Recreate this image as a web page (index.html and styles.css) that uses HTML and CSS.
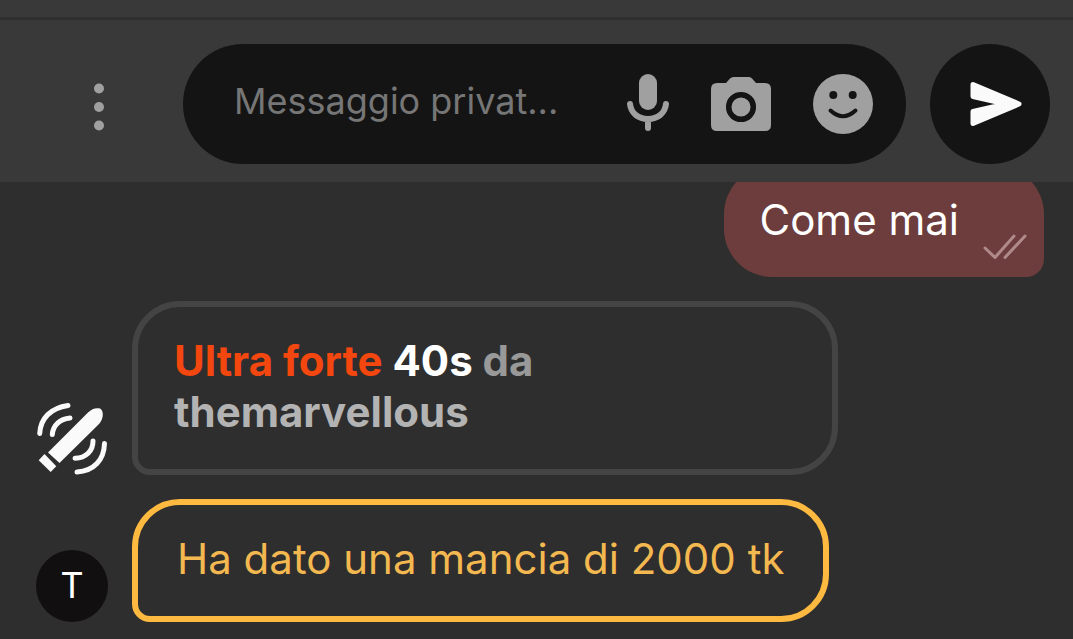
FILE: index.html
```html
<!DOCTYPE html>
<html lang="it">
<head>
    <meta charset="UTF-8">
    <meta name="viewport" content="width=device-width, initial-scale=1.0">
    <title>Messaggi privati</title>
    <link rel="stylesheet" href="styles.css">
</head>
<body>
    <div class="topStrip"></div>
    <form class="toolbar">
        <button type="button" class="menuBtn" aria-label="Menu">
            <svg width="48" height="60" viewBox="0 0 48 60" fill="#a0a0a0">
                <circle cx="24" cy="14.500" r="5"/>
                <circle cx="24" cy="33" r="5"/>
                <circle cx="24" cy="51.500" r="5"/>
            </svg>
        </button>
        <div class="inputBox">
            <input type="text" id="message" aria-label="Messaggio privato" placeholder="Messaggio privat...">
            <button type="button" aria-label="Microfono">
                <svg width="42" height="60" viewBox="0 0 42 60">
                    <rect x="12" width="18" height="36" rx="9" fill="#a0a0a0"/>
                    <path d="M3 30C4 39 11 45 21 45S38 39 39 30M21 45V54" fill="none" stroke="#a0a0a0" stroke-width="6" stroke-linecap="round"/>
                </svg>
            </button>
            <button type="button" aria-label="Fotocamera">
                <svg width="60" height="60" viewBox="0 0 60 60">
                    <path d="M6 9H15L19 4.500Q20.500 3 22.500 3H38Q40 3 41 4.500L45 9H54Q60 9 60 15V51Q60 57 54 57H6Q0 57 0 51V15Q0 9 6 9Z" fill="#a0a0a0"/>
                    <circle cx="30" cy="33" r="12.300" fill="none" stroke="#141414" stroke-width="5.500"/>
                </svg>
            </button>
            <button type="button" aria-label="Emoji">
                <svg width="60" height="60" viewBox="0 0 60 60">
                    <circle cx="30" cy="30" r="30" fill="#a0a0a0"/>
                    <circle cx="20.300" cy="21" r="4" fill="#141414"/>
                    <circle cx="39.700" cy="21" r="4" fill="#141414"/>
                    <path d="M17.500 36.500Q30 48 42.500 36.500" fill="none" stroke="#141414" stroke-width="4" stroke-linecap="round"/>
                </svg>
            </button>
        </div>
        <button type="submit" class="sendBtn" aria-label="Invia">
            <svg width="120" height="120" viewBox="0 0 120 120">
                <path d="M43 40.500L89 60L43 79.500V67.500L76 60L43 52.500Z" fill="#fafafa" stroke="#fafafa" stroke-width="5" stroke-linejoin="round"/>
            </svg>
        </button>
    </form>

    <main class="chat">
        <div class="message mine">
            <div class="bubble bubbleMine">
                <span>Come mai</span>
                <svg class="ticks" width="44" height="26" viewBox="0 0 44 26" fill="none" stroke="#b08989" stroke-width="3" stroke-linecap="round" stroke-linejoin="round">
                    <path d="M2 14L12 23.500L31 2M22 23.500L42 2"/>
                </svg>
            </div>
        </div>
        <div class="message">
            <svg class="toy" width="72" height="72" viewBox="0 0 72 72" fill="#fafafa">
                <path d="M12 49.500L52 9.500C56 5.500 60 4.500 64 5.500C67 7 67.500 12 66 16C65 19 63 21 61 23L23.500 60Z"/>
                <path d="M8.500 51L2.700 57.300L14.700 69L20.300 63.300Z"/>
                <path d="M32 2.500C15 5 4.500 15 3.700 30.500M34 15C24 16 17 22 16.300 31.500M57 38C57 48 50 55 39 55.300M68.500 40.500C68 57 58 68 41 69" fill="none" stroke="#fafafa" stroke-width="5" stroke-linecap="round"/>
            </svg>
            <div class="bubble bubbleToy">
                <span class="level">Ultra forte</span> <span class="time">40s</span> da <span class="user">themarvellous</span>
            </div>
        </div>
        <div class="message">
            <div class="avatar">T</div>
            <div class="bubble bubbleTip">Ha dato una mancia di 2000 tk</div>
        </div>
    </main>
</body>
</html>
```
FILE: styles.css
```css
* {
    box-sizing: border-box;
}
body {
    margin: 0;
    height: 100vh;
    display: flex;
    flex-direction: column;
    background: #2e2e2e;
    color: #fff;
    font-family: Inter, Roboto, sans-serif;
    font-size: 42px;
    line-height: 51px;
}
button {
    flex: none;
    padding: 0;
    border: none;
    background: none;
    cursor: pointer;
}
svg {
    display: block;
    flex: none;
}
.topStrip {
    flex: none;
    height: 20px;
    background: #393939;
    border-bottom: 3px solid #2f2f2f;
}
.toolbar {
    flex: none;
    display: flex;
    align-items: center;
    gap: 24px;
    padding: 24px 23px 18px 75px;
    background: #393939;
}
.menuBtn {
    margin-right: 36px;
}
.inputBox {
    flex: 1;
    min-width: 0;
    height: 120px;
    display: flex;
    align-items: center;
    gap: 42px;
    padding: 0 33px 0 51px;
    border-radius: 60px;
    background: #141414;
}
.inputBox input {
    flex: 1;
    min-width: 0;
    height: 60px;
    padding: 0 0 6px;
    border: none;
    outline: none;
    background: none;
    color: #fff;
    font-family: inherit;
    font-size: 36px;
}
.inputBox input::placeholder {
    color: #767676;
}
.sendBtn {
    border-radius: 50%;
    background: #141414;
}
/* newest message stays at the bottom, older ones slide under the toolbar */
.chat {
    flex: 1;
    min-height: 0;
    overflow: hidden;
    display: flex;
    flex-direction: column;
    justify-content: flex-end;
    gap: 24px;
    padding: 0 29px 17px 36px;
}
.message {
    flex: none;
    display: flex;
    align-items: flex-end;
    gap: 24px;
}
.mine {
    justify-content: flex-end;
}
.bubble {
    max-width: 706px;
    padding: 28px 36px 32px;
    border-radius: 48px 48px 48px 18px;
}
.bubbleMine {
    display: flex;
    align-items: flex-end;
    gap: 24px;
    padding: 28px 17px 32px 36px;
    border-radius: 48px 48px 18px 48px;
    background: #6d3d3d;
}
.ticks {
    margin-bottom: -15px;
}
.bubbleToy {
    border: 6px solid #444;
    color: #999;
    font-weight: 700;
}
.level {
    color: #f4470f;
}
.time {
    color: #fff;
}
.user {
    color: #b3b3b3;
}
.bubbleTip {
    padding-left: 39px;
    padding-right: 39px;
    border: 6px solid #fdb940;
    color: #f3b850;
}
.avatar {
    flex: none;
    width: 72px;
    height: 72px;
    border-radius: 50%;
    background: #110f10;
    font-family: Roboto, sans-serif;
    font-size: 36px;
    line-height: 72px;
    text-align: center;
}
```
